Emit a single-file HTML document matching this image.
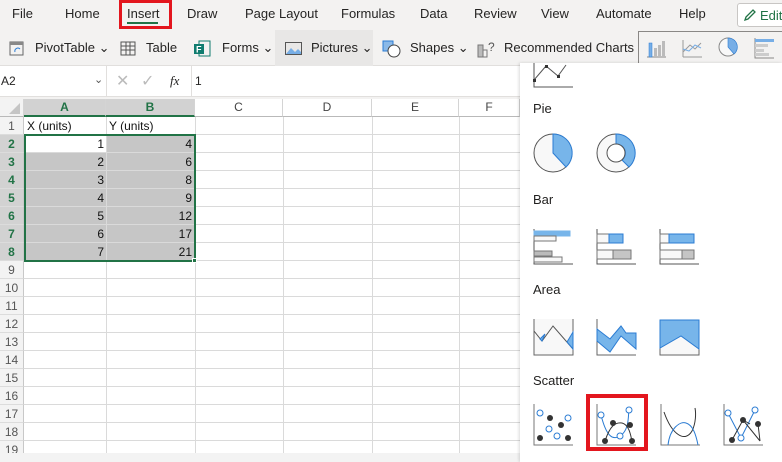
<!DOCTYPE html>
<html><head><meta charset="utf-8"><style>
*{margin:0;padding:0;box-sizing:border-box}
body{width:782px;height:462px;overflow:hidden;background:#fff;font-family:"Liberation Sans",sans-serif;position:relative;color:#252423}
.a{position:absolute}
.menu{left:0;top:0;width:782px;height:30px;background:#f3f2f1;font-size:13px}
.menu span{position:absolute;top:6px}
.tb{left:0;top:30px;width:782px;height:36px;background:#f3f2f1;font-size:13px;border-bottom:1px solid #e1dfdd}
.tb span{position:absolute;top:10px}
.fb{left:0;top:66px;width:782px;height:31px;background:#fff;border-bottom:1px solid #e1dfdd;font-size:12px}
.ch{top:99px;height:18px;background:#fff;border-right:1px solid #d4d4d4;border-bottom:1px solid #b9b9b9;font-size:12px;text-align:center;line-height:17px;color:#444}
.rh{left:0;width:24px;height:18px;font-size:12px;line-height:18px;text-align:center;color:#555;background:#f3f3f3;border-bottom:1px solid #dcdcdc;border-right:1px solid #c8c8c8}
.hl{height:1px;background:#dadada;left:24px;width:496px}
.vl{width:1px;background:#dadada;top:117px;height:336px}
.cell{font-size:12px;height:18px;line-height:18px;text-align:right;color:#111}
.panel{left:520px;top:63px;width:262px;height:399px;background:#fff;box-shadow:-1px 0 3px rgba(0,0,0,.15)}
.lab{font-size:13px;color:#201f1e}
</style></head><body>
<div class="a menu">
<span style="left:12px">File</span><span style="left:65px">Home</span><span style="left:127px">Insert</span><span style="left:187px">Draw</span><span style="left:245px">Page Layout</span><span style="left:341px">Formulas</span><span style="left:420px">Data</span><span style="left:474px">Review</span><span style="left:541px">View</span><span style="left:596px">Automate</span><span style="left:679px">Help</span>
</div>
<div class="a" style="left:119px;top:0;width:53px;height:29px;border:3px solid #e3161e"></div>
<div class="a" style="left:127px;top:22px;width:31px;height:2px;background:#217346"></div>
<div class="a" style="left:737px;top:3px;width:50px;height:24px;border:1px solid #c8c6c4;background:#fff;border-radius:3px;font-size:13px;color:#217346;padding:4px 0 0 22px">Edit</div>
<svg class="a" style="left:743px;top:8px" width="14" height="14"><path d="M2 12 L3 9 L10 2 L12 4 L5 11 Z" fill="none" stroke="#217346" stroke-width="1.3"/></svg>
<div class="a tb">
<svg class="a" style="left:9px;top:11px" width="15" height="15"><rect x="1" y="1" width="13" height="13" fill="none" stroke="#666"/><rect x="1" y="1" width="13" height="3" fill="#888"/><path d="M6 11 A3 3 0 0 1 11 8" stroke="#2b7cd3" fill="none"/></svg>
<span style="left:35px">PivotTable ⌄</span>
<svg class="a" style="left:120px;top:11px" width="16" height="15"><rect x="1" y="1" width="14" height="13" fill="none" stroke="#555"/><path d="M1 5H15M1 9H15M6 1V14M10 1V14" stroke="#555"/></svg>
<span style="left:146px">Table</span>
<svg class="a" style="left:193px;top:10px" width="18" height="17"><rect x="6" y="1" width="11" height="15" fill="none" stroke="#107c6f"/><rect x="1" y="4" width="10" height="10" fill="#107c6f"/><text x="3" y="12.5" font-size="9" fill="#fff" font-weight="bold" font-family="Liberation Sans">F</text></svg>
<span style="left:222px">Forms ⌄</span>
<div class="a" style="left:275px;top:0;width:98px;height:36px;background:#e8e7e6"></div>
<svg class="a" style="left:285px;top:12px" width="17" height="13"><rect x=".5" y=".5" width="16" height="12" fill="none" stroke="#555"/><path d="M1 12 L6 6 L10 10 L13 7 L16 10 L16 12Z" fill="#77aee6"/></svg>
<span style="left:311px">Pictures ⌄</span>
<svg class="a" style="left:382px;top:10px" width="20" height="18"><rect x="1" y="1" width="10" height="10" fill="#8ab9e8" stroke="#2b7cd3"/><circle cx="12" cy="11" r="6" fill="#fff" stroke="#444"/></svg>
<span style="left:410px">Shapes ⌄</span>
<svg class="a" style="left:477px;top:10px" width="22" height="18"><rect x="1" y="5" width="5" height="12" fill="#bbb" stroke="#777"/><rect x="6" y="10" width="4" height="7" fill="none" stroke="#777"/><text x="11" y="11" font-size="12" fill="#555" font-family="Liberation Sans">?</text></svg>
<span style="left:504px">Recommended Charts</span>
<div class="a" style="left:638px;top:1px;width:150px;height:34px;border:1px solid #8a8886;background:#f3f2f1"></div>
<svg class="a" style="left:646px;top:7px" width="136" height="22">
<path d="M1 20H20" stroke="#888"/><rect x="3" y="6" width="3" height="14" fill="#77aee6" stroke="#2b7cd3" stroke-width=".5"/><rect x="8" y="11" width="3" height="9" fill="#bbb"/><rect x="12" y="8" width="3" height="12" fill="#bbb"/><rect x="16" y="4" width="3" height="16" fill="#bbb"/>
<path d="M37 20H56M37 20V3M37 15 L44 8 L49 12 L55 6" stroke="#999" fill="none"/><path d="M37 12 L43 14 L49 8 L55 11" stroke="#77aee6" fill="none"/>
<circle cx="82" cy="10" r="9" fill="#f8f8f8" stroke="#888"/><path d="M82 1 A9 9 0 0 1 88 17 L82 10Z" fill="#77aee6" stroke="#2b7cd3" stroke-width=".6"/>
<path d="M109 1V21H128" stroke="#888" fill="none"/><rect x="109" y="2" width="19" height="3" fill="#77aee6"/><rect x="109" y="7" width="13" height="3" fill="#ccc"/><rect x="109" y="12" width="9" height="3" fill="#ccc"/><rect x="109" y="16" width="14" height="3" fill="#ccc"/>
</svg>
</div>
<div class="a fb">
<div class="a" style="left:0;top:0;width:107px;height:30px;border-right:1px solid #e1dfdd"><span class="a" style="left:1px;top:8px">A2</span><span class="a" style="left:94px;top:7px;font-size:11px;color:#555">⌄</span></div>
<span class="a" style="left:116px;top:5px;font-size:16px;color:#bbb">✕</span>
<span class="a" style="left:141px;top:5px;font-size:16px;color:#bbb">✓</span>
<span class="a" style="left:170px;top:7px;font-style:italic;font-family:'Liberation Serif',serif;font-size:13px">fx</span>
<div class="a" style="left:191px;top:0;width:1px;height:30px;background:#e1dfdd"></div>
<span class="a" style="left:195px;top:8px">1</span>
</div>
<div class="a" style="left:0;top:97px;width:782px;height:2px;background:#f3f2f1"></div>
<!-- column headers -->
<div class="a ch" style="left:0;width:24px;background:#f3f3f3"><svg width="24" height="17"><path d="M20 4 L20 15 L9 15Z" fill="#c5c5c5"/></svg></div>
<div class="a ch" style="left:24px;width:82px;background:#d2d2d2;color:#217346;font-weight:bold;border-bottom:2px solid #217346">A</div>
<div class="a ch" style="left:106px;width:89px;background:#d2d2d2;color:#217346;font-weight:bold;border-bottom:2px solid #217346">B</div>
<div class="a ch" style="left:195px;width:88px">C</div>
<div class="a ch" style="left:283px;width:89px">D</div>
<div class="a ch" style="left:372px;width:87px">E</div>
<div class="a ch" style="left:459px;width:61px">F</div>
<!-- selection fill -->
<div class="a" style="left:24px;top:135px;width:171px;height:126px;background:#c6c6c6"></div>
<div class="a" style="left:25px;top:136px;width:81px;height:16px;background:#fff"></div>
<!-- grid lines -->
<div class="a vl" style="left:106px"></div><div class="a vl" style="left:195px"></div><div class="a vl" style="left:283px"></div><div class="a vl" style="left:372px"></div><div class="a vl" style="left:459px"></div>
<div id="rows"></div>
<div class="a" style="left:24px;top:134px;width:172px;height:128px;border:2px solid #217346"></div>
<div class="a" style="left:192px;top:258px;width:5px;height:5px;background:#217346;border:1px solid #fff"></div>
<div class="a" style="left:0;top:453px;width:520px;height:9px;background:#f3f3f3"></div>
<script>
var r='';
for(var i=1;i<=19;i++){var y=117+(i-1)*18;var sel=i>=2&&i<=8;
r+='<div class="a rh" style="top:'+y+'px;'+(sel?'color:#217346;font-weight:bold;background:#d2d2d2;':'')+'">'+i+'</div>';
r+='<div class="a hl" style="top:'+(y+17)+'px"></div>';}
var X=[1,2,3,4,5,6,7],Y=[4,6,8,9,12,17,21];
for(var i=0;i<7;i++){var y=135+i*18;
r+='<div class="a cell" style="left:24px;width:80px;top:'+y+'px">'+X[i]+'</div>';
r+='<div class="a cell" style="left:106px;width:86px;top:'+y+'px">'+Y[i]+'</div>';}
r+='<div class="a cell" style="left:27px;top:117px;text-align:left">X (units)</div><div class="a cell" style="left:109px;top:117px;text-align:left">Y (units)</div>';
document.getElementById('rows').outerHTML=r;
</script>
<div class="a panel">
<svg class="a" style="left:0;top:0" width="262" height="399">
<g fill="none" stroke="#555" stroke-width="1">
<path d="M14 0V24H53"/><path d="M14 17 L26 3 L38 13 L46 2"/>
</g>
<rect x="13" y="16" width="3" height="3" fill="#333"/><rect x="25" y="2" width="3" height="3" fill="#333"/><rect x="37" y="12" width="3" height="3" fill="#333"/>
<text x="13" y="50" font-size="13" fill="#201f1e" font-family="Liberation Sans">Pie</text>
<circle cx="33" cy="90" r="19" fill="#f8f8f8" stroke="#555"/><path d="M33 71 A19 19 0 0 1 46 104 L33 90Z" fill="#77b5ea" stroke="#2b7cd3"/>
<circle cx="96" cy="90" r="19" fill="#f8f8f8" stroke="#555"/><path d="M96 71 A19 19 0 0 1 109 104 L102 97 A9 9 0 0 0 96 81Z" fill="#77b5ea" stroke="#2b7cd3"/><circle cx="96" cy="90" r="9" fill="#fff" stroke="#555"/>
<text x="13" y="141" font-size="13" fill="#201f1e" font-family="Liberation Sans">Bar</text>
<g stroke="#777" fill="#f8f8f8">
<path d="M14 166V201H53" fill="none" stroke="#555"/>
<rect x="14" y="168" width="36" height="5" fill="#77b5ea" stroke="#77b5ea"/><rect x="14" y="173" width="22" height="5"/><rect x="14" y="188" width="18" height="5" fill="#bbb"/><rect x="14" y="194" width="28" height="5"/>
<path d="M77 166V201H116" fill="none" stroke="#555"/>
<rect x="77" y="171" width="12" height="9"/><rect x="89" y="171" width="14" height="9" fill="#77b5ea" stroke="#2b7cd3"/><rect x="77" y="187" width="16" height="9"/><rect x="93" y="187" width="18" height="9" fill="#c5c5c5"/>
<path d="M140 166V201H179" fill="none" stroke="#555"/>
<rect x="140" y="171" width="9" height="9"/><rect x="149" y="171" width="25" height="9" fill="#77b5ea" stroke="#2b7cd3"/><rect x="140" y="187" width="22" height="9"/><rect x="162" y="187" width="12" height="9" fill="#c5c5c5"/>
</g>
<text x="13" y="231" font-size="13" fill="#201f1e" font-family="Liberation Sans">Area</text>
<path d="M14 256V292H53V256" fill="#f8f8f8" stroke="#666"/>
<path d="M14 268 L22 278 L33 263 L53 286" fill="none" stroke="#555"/><path d="M20 276 L25 271 L22 278Z M47 279 L53 269 L53 286Z" fill="#77b5ea" stroke="#2b7cd3"/>
<path d="M77 256V292H116" fill="none" stroke="#666"/><path d="M77 266 L90 276 L101 263 L106 270 L116 270 L116 286 L101 273 L90 289 L77 278Z" fill="#77b5ea" stroke="#2b7cd3"/>
<rect x="140" y="257" width="39" height="35" fill="#f8f8f8" stroke="#666"/><path d="M140 257H179V286L161 273 L140 285Z" fill="#77b5ea" stroke="#2b7cd3"/>
<text x="13" y="322" font-size="13" fill="#201f1e" font-family="Liberation Sans">Scatter</text>
<g fill="none">
<path d="M14 341V382H53" stroke="#777"/>
<circle cx="20" cy="350" r="3" stroke="#2b7cd3" fill="#fff"/><circle cx="29" cy="366" r="3" stroke="#2b7cd3" fill="#fff"/><circle cx="37" cy="373" r="3" stroke="#2b7cd3" fill="#fff"/><circle cx="48" cy="355" r="3" stroke="#2b7cd3" fill="#fff"/>
<circle cx="30" cy="355" r="3" fill="#333"/><circle cx="41" cy="362" r="3" fill="#333"/><circle cx="20" cy="375" r="3" fill="#333"/><circle cx="48" cy="375" r="3" fill="#333"/>
<path d="M77 341V382H116" stroke="#777"/>
<path d="M81 352 C86 372 92 378 100 373 C110 367 108 350 109 347" stroke="#2b7cd3"/>
<path d="M85 378 C90 363 95 359 102 360 C110 362 111 375 112 378" stroke="#333"/>
<circle cx="81" cy="352" r="3" stroke="#2b7cd3" fill="#fff"/><circle cx="100" cy="373" r="3" stroke="#2b7cd3" fill="#fff"/><circle cx="109" cy="347" r="3" stroke="#2b7cd3" fill="#fff"/>
<circle cx="93" cy="360" r="3" fill="#333"/><circle cx="110" cy="362" r="3" fill="#333"/><circle cx="85" cy="378" r="3" fill="#333"/><circle cx="112" cy="378" r="3" fill="#333"/>
<path d="M141 341V382H180" stroke="#777"/>
<path d="M144 349 C152 372 165 380 172 368 C176 360 176 350 175 345" stroke="#333"/>
<path d="M148 382 C150 365 160 358 166 360 C173 362 176 372 178 382" stroke="#2b7cd3"/>
<path d="M204 341V382H243" stroke="#777"/>
<path d="M208 350 L221 375 L235 347" stroke="#2b7cd3"/><path d="M212 377 L223 357 L240 378 M223 357 L230 361 M240 378 L238 361" stroke="#333"/>
<circle cx="208" cy="350" r="3" stroke="#2b7cd3" fill="#fff"/><circle cx="221" cy="375" r="3" stroke="#2b7cd3" fill="#fff"/><circle cx="235" cy="347" r="3" stroke="#2b7cd3" fill="#fff"/>
<circle cx="223" cy="357" r="3" fill="#333"/><circle cx="212" cy="377" r="3" fill="#333"/><circle cx="238" cy="361" r="3" fill="#333"/>
</g>
</svg>
<div class="a" style="left:66px;top:331px;width:62px;height:57px;border:4px solid #e3161e"></div>
</div>
</body></html>
